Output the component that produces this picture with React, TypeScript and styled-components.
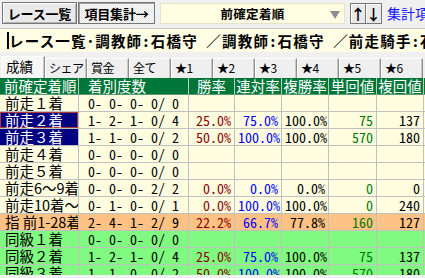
import React from 'react';
import styled, { createGlobalStyle } from 'styled-components';

const JP = '"Noto Sans CJK JP", "Noto Sans", sans-serif';

const GlobalStyle = createGlobalStyle`
  html, body {
    margin: 0;
    padding: 0;
  }
  body {
    width: 425px;
    height: 278px;
    overflow: hidden;
    background: #f0f0f0;
    font-family: ${JP};
    color: #000;
  }
`;

const Toolbar = styled.div`
  display: flex;
  align-items: center;
  height: 26px;
  padding: 0 2px;
  white-space: nowrap;
  overflow: hidden;
  & > * {
    flex: none;
  }
`;

const ToolButton = styled.div<{ $pressed?: boolean; $w: number }>`
  box-sizing: border-box;
  width: ${p => p.$w}px;
  height: 22px;
  display: flex;
  align-items: center;
  justify-content: center;
  font-weight: 700;
  font-size: 13px;
  letter-spacing: -0.2px;
  border: 1px solid #767676;
  box-shadow: ${p =>
    p.$pressed ? 'inset 1px 1px #a0a0a0' : 'inset 1px 1px #fff, inset -1px -1px #b4b4b4'};
  background: ${p =>
    p.$pressed
      ? 'repeating-conic-gradient(#ffffff 0 25%, #e4e4e4 0 50%) 0 0 / 2px 2px'
      : '#e9e9e9'};
  & + & {
    margin-left: 1px;
  }
`;

const Select = styled.div`
  box-sizing: border-box;
  position: relative;
  width: 185px;
  height: 21px;
  margin-left: 5px;
  background: #fffde2;
  border: 1px solid #e4e2cc;
  display: flex;
  align-items: center;
  justify-content: center;
  font-weight: 700;
  font-size: 12.5px;
  letter-spacing: 0.3px;
`;

const Caret = styled.span`
  position: absolute;
  right: 4px;
  top: 7px;
  width: 0;
  height: 0;
  border-left: 5px solid transparent;
  border-right: 5px solid transparent;
  border-top: 8px solid #8c8c8c;
`;

const ArrowGroup = styled.div`
  display: flex;
  margin-left: 5px;
`;

const ArrowButton = styled.div`
  box-sizing: border-box;
  width: 16px;
  height: 21px;
  display: flex;
  align-items: center;
  justify-content: center;
  font-weight: 700;
  font-size: 15px;
  background: #e9e9e9;
  border: 1px solid #767676;
  box-shadow: inset 1px 1px #fff;
  & + & {
    border-left: none;
  }
`;

const LinkText = styled.span`
  margin-left: 5px;
  color: #1414ff;
  font-size: 14px;
`;

const InfoBar = styled.div`
  box-sizing: border-box;
  height: 24px;
  margin-top: 2px;
  padding-left: 7px;
  display: flex;
  align-items: center;
  background: #fffde4;
  border-top: 1px solid #c8c8c8;
  white-space: pre;
  overflow: hidden;
`;

const EditCaret = styled.span`
  flex: none;
  width: 2px;
  height: 17px;
  background: #000;
`;

const InfoText = styled.span`
  font-weight: 700;
  font-size: 14.5px;
  letter-spacing: 1.2px;
  line-height: 18px;
  font-feature-settings: "hwid" 1;
`;

const Sep = styled.span`
  font-feature-settings: normal;
`;

const TabStrip = styled.div`
  display: flex;
  align-items: flex-end;
  height: 26px;
  padding-left: 1px;
  white-space: nowrap;
  overflow: hidden;
`;

const Tab = styled.div<{ $active?: boolean }>`
  box-sizing: border-box;
  flex: none;
  width: ${p => (p.$active ? 44 : 42)}px;
  height: ${p => (p.$active ? 22 : 20)}px;
  padding-left: ${p => (p.$active ? 4 : 3)}px;
  font-size: ${p => (p.$active ? 13.5 : 12)}px;
  letter-spacing: ${p => (p.$active ? 0 : -0.5)}px;
  line-height: ${p => (p.$active ? 18 : 17)}px;
  background: ${p => (p.$active ? '#f7f7f7' : '#efefef')};
  border-top: 1px solid #fff;
  border-left: 1px solid #fff;
  border-right: 1px solid #8e8e8e;
  box-shadow: inset -1px 0 #c8c8c8;
`;

const TableArea = styled.div`
  height: 197px;
  overflow: hidden;
`;

const Row = styled.div<{ $bg: string }>`
  display: grid;
  grid-template-columns: 79px 110px 46px 47px 47px 48px 47px 60px;
  height: 17px;
  background: ${p => p.$bg};
`;

const Cell = styled.div<{
  $align?: 'left' | 'center' | 'right';
  $color?: string;
  $pad?: number;
}>`
  box-sizing: border-box;
  height: 17px;
  border-right: 1px solid #c0c0c0;
  border-bottom: 1px solid #c0c0c0;
  padding: 0 ${p => p.$pad ?? 3}px;
  font-size: 14px;
  line-height: 16px;
  font-feature-settings: "hwid" 1;
  text-align: ${p => p.$align ?? 'right'};
  color: ${p => p.$color ?? '#000'};
  white-space: pre;
  overflow: hidden;
`;

const HeadCell = styled(Cell)`
  color: #fff;
  font-size: 14.5px;
  font-feature-settings: normal;
  border-right-color: #b8cfc0;
  border-bottom-color: #5a9a72;
`;

const LabelCell = styled(Cell)<{ $selected?: boolean; $focused?: boolean }>`
  font-size: 14.5px;
  font-feature-settings: normal;
  background: ${p => (p.$selected ? '#000080' : 'transparent')};
  color: ${p => (p.$selected ? '#fff' : '#000')};
  box-shadow: ${p => (p.$focused ? 'inset 0 0 0 1px #a83a3a' : 'none')};
`;

type RowData = {
  label: string;
  counts: string;
  stats?: [string, string, string, string, string];
  bg: string;
  selected?: boolean;
  focused?: boolean;
};

const YELLOW = '#fffde0';
const ORANGE = '#ffc285';
const GREEN = '#80fa80';

const rows: RowData[] = [
  { label: '前走１着', counts: '0- 0- 0- 0/ 0', bg: YELLOW },
  { label: '前走２着', counts: '1- 2- 1- 0/ 4', stats: ['25.0%', '75.0%', '100.0%', '75', '137'], bg: YELLOW, selected: true, focused: true },
  { label: '前走３着', counts: '1- 1- 0- 0/ 2', stats: ['50.0%', '100.0%', '100.0%', '570', '180'], bg: YELLOW, selected: true },
  { label: '前走４着', counts: '0- 0- 0- 0/ 0', bg: YELLOW },
  { label: '前走５着', counts: '0- 0- 0- 0/ 0', bg: YELLOW },
  { label: '前走6〜9着', counts: '0- 0- 0- 2/ 2', stats: ['0.0%', '0.0%', '0.0%', '0', '0'], bg: YELLOW },
  { label: '前走10着〜', counts: '0- 1- 0- 0/ 1', stats: ['0.0%', '100.0%', '100.0%', '0', '240'], bg: YELLOW },
  { label: '指 前1-28着', counts: '2- 4- 1- 2/ 9', stats: ['22.2%', '66.7%', '77.8%', '160', '127'], bg: ORANGE },
  { label: '同級１着', counts: '0- 0- 0- 0/ 0', bg: GREEN },
  { label: '同級２着', counts: '1- 2- 1- 0/ 4', stats: ['25.0%', '75.0%', '100.0%', '75', '137'], bg: GREEN },
  { label: '同級３着', counts: '1- 1- 0- 0/ 2', stats: ['50.0%', '100.0%', '100.0%', '570', '180'], bg: GREEN },
];

const statColors = ['#8b0000', '#0000ff', '#000', '#007a00', '#000'];
const heads = ['勝率', '連対率', '複勝率', '単回値', '複回値'];
const tabs = ['成績', 'シェア', '賞金', '全て', '★1', '★2', '★3', '★4', '★5', '★6'];

const App = () => {
  return (
    <>
      <GlobalStyle />
      <Toolbar>
        <ToolButton $w={75}>レース一覧</ToolButton>
        <ToolButton $w={77} $pressed>
          項目集計→
        </ToolButton>
        <Select>
          前確定着順
          <Caret />
        </Select>
        <ArrowGroup>
          <ArrowButton>↑</ArrowButton>
          <ArrowButton>↓</ArrowButton>
        </ArrowGroup>
        <LinkText>集計項目</LinkText>
      </Toolbar>
      <InfoBar>
        <EditCaret />
        <InfoText>
          レース一覧･調教師:石橋守 <Sep>／</Sep>調教師:石橋守 <Sep>／</Sep>前走騎手:石橋守
        </InfoText>
      </InfoBar>
      <TabStrip>
        {tabs.map((t, i) => (
          <Tab key={t} $active={i === 0}>
            {t}
          </Tab>
        ))}
      </TabStrip>
      <TableArea>
        <Row $bg="#017639">
          <HeadCell $align="left" $pad={4}>前確定着順</HeadCell>
          <HeadCell $align="left" $pad={9}>着別度数</HeadCell>
          {heads.map(h => (
            <HeadCell key={h} $align="center" $pad={0}>
              {h}
            </HeadCell>
          ))}
          <HeadCell $align="left">複勝</HeadCell>
        </Row>
        {rows.map(r => (
          <Row key={r.label} $bg={r.bg}>
            <LabelCell $align="left" $pad={5} $selected={r.selected} $focused={r.focused}>
              {r.label}
            </LabelCell>
            <Cell $align="center" $pad={0}>
              {r.counts}
            </Cell>
            {statColors.map((c, i) => (
              <Cell key={i} $color={c}>
                {r.stats ? r.stats[i] : ''}
              </Cell>
            ))}
            <Cell />
          </Row>
        ))}
      </TableArea>
    </>
  );
};

export default App;
